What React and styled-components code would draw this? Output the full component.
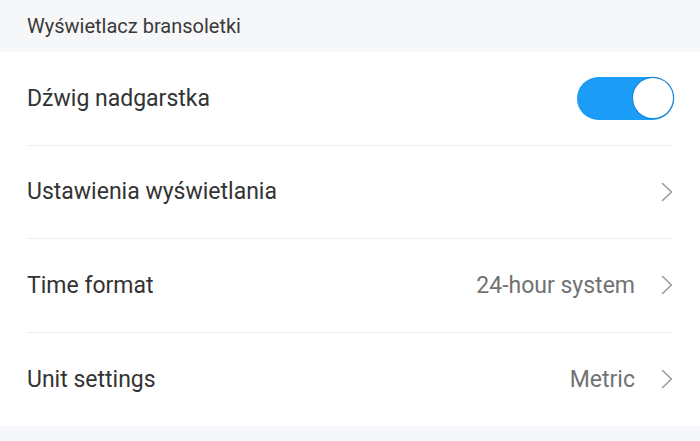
import styled, { createGlobalStyle } from 'styled-components';

const GlobalStyle = createGlobalStyle`
  html, body {
    margin: 0;
    padding: 0;
    background: #ffffff;
    font-family: Roboto, "Noto Sans", sans-serif;
  }
`;

const Page = styled.div`
  width: 700px;
  height: 441px;
  display: flex;
  flex-direction: column;
  background: #ffffff;
  overflow: hidden;
`;

const SectionHeader = styled.div`
  height: 52px;
  flex-shrink: 0;
  display: flex;
  align-items: center;
  padding: 0 27px;
  background: #f6f7f9;
  color: #3a3a3a;
  font-size: 20px;
`;

const List = styled.div`
  display: flex;
  flex-direction: column;
  padding: 0 27px;
`;

const Row = styled.div`
  height: 93.5px;
  display: flex;
  align-items: center;
  justify-content: space-between;
  border-bottom: ${(p) => (p.$last ? 'none' : '1px solid #eeeeee')};
  box-sizing: border-box;
`;

const Label = styled.span`
  font-size: 23px;
  color: #333333;
`;

const Right = styled.div`
  display: flex;
  align-items: center;
  gap: 26px;
`;

const Value = styled.span`
  font-size: 23px;
  color: #727272;
`;

const Footer = styled.div`
  flex: 1;
  background: #f6f7fa;
`;

const Switch = styled.div`
  width: 97px;
  height: 43px;
  border-radius: 22px;
  background: ${(p) => (p.$on ? '#1a9cf7' : '#dddddd')};
  position: relative;
  margin-right: -1px;
`;

const Knob = styled.div`
  position: absolute;
  top: 1.5px;
  right: 1.5px;
  width: 40px;
  height: 40px;
  border-radius: 50%;
  background: #ffffff;
  box-shadow: 0 0 0 1.2px #1585d4;
`;

const Chevron = () => (
  <svg width="12" height="20" viewBox="0 0 12 20" fill="none">
    <path d="M1.5 1.5 L10.5 10 L1.5 18.5" stroke="#959595" strokeWidth="1.4" strokeLinecap="round" strokeLinejoin="round" />
  </svg>
);

export default function App() {
  return (
    <Page>
      <GlobalStyle />
      <SectionHeader>Wyświetlacz bransoletki</SectionHeader>
      <List>
        <Row>
          <Label>Dźwig nadgarstka</Label>
          <Switch $on>
            <Knob />
          </Switch>
        </Row>
        <Row>
          <Label>Ustawienia wyświetlania</Label>
          <Right>
            <Chevron />
          </Right>
        </Row>
        <Row>
          <Label>Time format</Label>
          <Right>
            <Value>24-hour system</Value>
            <Chevron />
          </Right>
        </Row>
        <Row $last>
          <Label>Unit settings</Label>
          <Right>
            <Value>Metric</Value>
            <Chevron />
          </Right>
        </Row>
      </List>
      <Footer />
    </Page>
  );
}
